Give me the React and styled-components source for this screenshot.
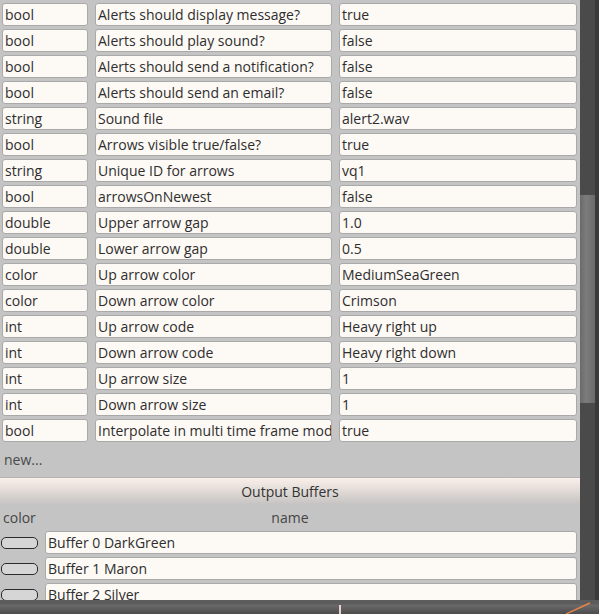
import React from 'react';
import styled, { createGlobalStyle } from 'styled-components';

const GlobalStyle = createGlobalStyle`
  html, body { margin: 0; padding: 0; background: #c4c4c4; }
  body { font-family: "Open Sans", "Noto Sans", sans-serif; }
`;

const inputs = [
  ['bool', 'Alerts should display message?', 'true'],
  ['bool', 'Alerts should play sound?', 'false'],
  ['bool', 'Alerts should send a notification?', 'false'],
  ['bool', 'Alerts should send an email?', 'false'],
  ['string', 'Sound file', 'alert2.wav'],
  ['bool', 'Arrows visible true/false?', 'true'],
  ['string', 'Unique ID for arrows', 'vq1'],
  ['bool', 'arrowsOnNewest', 'false'],
  ['double', 'Upper arrow gap', '1.0'],
  ['double', 'Lower arrow gap', '0.5'],
  ['color', 'Up arrow color', 'MediumSeaGreen'],
  ['color', 'Down arrow color', 'Crimson'],
  ['int', 'Up arrow code', 'Heavy right up'],
  ['int', 'Down arrow code', 'Heavy right down'],
  ['int', 'Up arrow size', '1'],
  ['int', 'Down arrow size', '1'],
  ['bool', 'Interpolate in multi time frame mode', 'true'],
];

const buffers = ['Buffer 0 DarkGreen', 'Buffer 1 Maron', 'Buffer 2 Silver'];

export default function App() {
  return (
    <Window>
      <GlobalStyle />
      <Main>
        <Content>
          <Grid>
            {inputs.map(([type, label, value], i) => (
              <React.Fragment key={i}>
                <Field>{type}</Field>
                <Field>{label}</Field>
                <Field>{value}</Field>
              </React.Fragment>
            ))}
          </Grid>
          <NewLink>new...</NewLink>
          <SectionHeader>Output Buffers</SectionHeader>
          <ColumnHeads>
            <span>color</span>
            <NameHead>name</NameHead>
          </ColumnHeads>
          {buffers.map(b => (
            <BufferRow key={b}>
              <Swatch />
              <Field>{b}</Field>
            </BufferRow>
          ))}
        </Content>
        <ScrollTrack>
          <Thumb />
        </ScrollTrack>
      </Main>
      <BottomBar>
        <Divider />
        <OrangeLine viewBox="0 0 30 14" width="30" height="14">
          <line x1="0" y1="14" x2="24" y2="3" stroke="#e8834a" strokeWidth="1.4" />
        </OrangeLine>
      </BottomBar>
    </Window>
  );
}

const Window = styled.div`
  width: 599px;
  height: 614px;
  display: flex;
  flex-direction: column;
  overflow: hidden;
  background: #c4c4c4;
`;

const Main = styled.div`
  flex: 1;
  display: flex;
  min-height: 0;
`;

const Content = styled.div`
  width: 580px;
  overflow: hidden;
  padding-top: 3px;
`;

const Grid = styled.div`
  display: grid;
  grid-template-columns: 86px 237px 238px;
  column-gap: 7px;
  row-gap: 3px;
  padding-left: 2px;
`;

const Field = styled.div`
  box-sizing: border-box;
  height: 23px;
  line-height: 21px;
  padding: 0 2px;
  border: 1px solid #a9a9a9;
  border-radius: 3px;
  background: #fdf9f5;
  color: #2e2e2e;
  font-size: 14px;
  white-space: nowrap;
  overflow: hidden;
`;

const NewLink = styled.div`
  height: 35px;
  line-height: 36px;
  padding-left: 4px;
  color: #4a4a4a;
  font-size: 14px;
`;

const SectionHeader = styled.div`
  box-sizing: border-box;
  height: 27px;
  line-height: 27px;
  text-align: center;
  border-top: 1px solid #b4b4b4;
  background: linear-gradient(#fbf0ea, #c6c4c3);
  color: #333;
  font-size: 14px;
`;

const ColumnHeads = styled.div`
  display: flex;
  height: 27px;
  line-height: 28px;
  padding-left: 3px;
  color: #444;
  font-size: 14px;
`;

const NameHead = styled.span`
  flex: 1;
  text-align: center;
  padding-right: 36px;
`;

const BufferRow = styled.div`
  display: grid;
  grid-template-columns: 37px 532px;
  column-gap: 7px;
  align-items: center;
  padding-left: 1px;
  margin-bottom: 3px;
`;

const Swatch = styled.div`
  box-sizing: border-box;
  height: 12px;
  border: 1.5px solid #2c2c2c;
  border-radius: 5px;
  background: #d6d6d6;
`;

const ScrollTrack = styled.div`
  width: 19px;
  background: linear-gradient(90deg, #4a4a4a 0, #4a4a4a 15px, #3a3a3a 15px);
  padding-top: 195px;
  box-sizing: border-box;
`;

const Thumb = styled.div`
  width: 15px;
  height: 208px;
  background: linear-gradient(90deg, #6a6a6a, #7c7c7c 40%, #6c6c6c);
`;

const BottomBar = styled.div`
  height: 14px;
  position: relative;
  background: linear-gradient(#5c5c5c 0, #5c5c5c 4px, #6a6a6a 5px, #4c4c4c);
`;

const Divider = styled.div`
  position: absolute;
  left: 339px;
  top: 5px;
  width: 2px;
  height: 9px;
  background: #e8cfd0;
`;

const OrangeLine = styled.svg`
  position: absolute;
  left: 566px;
  bottom: 0;
`;
